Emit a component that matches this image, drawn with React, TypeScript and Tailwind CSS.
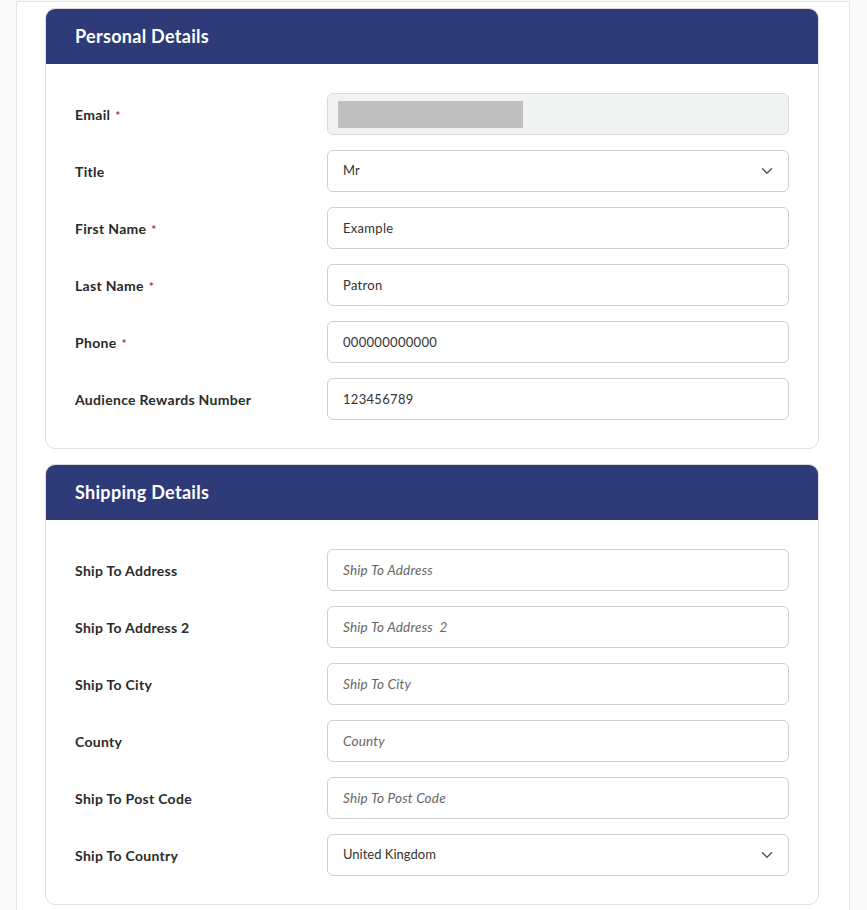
import React from 'react';

type Field = {
  label: string;
  required?: boolean;
  value?: string;
  placeholder?: string;
  kind?: 'text' | 'select' | 'redacted';
};

const personal: Field[] = [
  { label: 'Email', required: true, kind: 'redacted' },
  { label: 'Title', value: 'Mr', kind: 'select' },
  { label: 'First Name', required: true, value: 'Example' },
  { label: 'Last Name', required: true, value: 'Patron' },
  { label: 'Phone', required: true, value: '000000000000' },
  { label: 'Audience Rewards Number', value: '123456789' },
];

const shipping: Field[] = [
  { label: 'Ship To Address', placeholder: 'Ship To Address' },
  { label: 'Ship To Address 2', placeholder: 'Ship To Address  2' },
  { label: 'Ship To City', placeholder: 'Ship To City' },
  { label: 'County', placeholder: 'County' },
  { label: 'Ship To Post Code', placeholder: 'Ship To Post Code' },
  { label: 'Ship To Country', value: 'United Kingdom', kind: 'select' },
];

const Chevron = () => (
  <svg width="12" height="8" viewBox="0 0 12 8" fill="none" className="shrink-0">
    <path d="M1.5 1.8 6 6.2l4.5-4.4" stroke="#555" strokeWidth="1.4" strokeLinecap="round" strokeLinejoin="round" />
  </svg>
);

const Control = ({ field }: { field: Field }) => {
  if (field.kind === 'redacted') {
    return (
      <div className="h-[42px] rounded-[6px] border border-[#dadada] bg-[#f1f2f2] pl-[10px] flex items-center">
        <div className="h-[27px] w-[185px] bg-[#c0c0c0]" />
      </div>
    );
  }
  if (field.kind === 'select') {
    return (
      <div className="h-[42px] rounded-[6px] border border-[#cfcfcf] bg-white pl-[15px] pr-[15px] flex items-center justify-between text-[13px] text-[#333]">
        <span>{field.value}</span>
        <Chevron />
      </div>
    );
  }
  return (
    <input
      readOnly
      defaultValue={field.value}
      placeholder={field.placeholder}
      className="h-[42px] w-full rounded-[6px] border border-[#cfcfcf] bg-white px-[15px] text-[13px] tracking-[0.3px] text-[#333] outline-none placeholder:italic placeholder:text-[13.5px] placeholder:tracking-[0.2px] placeholder:text-[#666]"
    />
  );
};

const Card = ({ title, fields }: { title: string; fields: Field[] }) => (
  <div className="rounded-[10px] border border-[#dedede] bg-white overflow-hidden">
    <div className="h-[55px] bg-[#2e3b78] px-[29px] flex items-center">
      <h2 className="text-white font-bold text-[18px] tracking-[0.3px]">{title}</h2>
    </div>
    <div className="px-[29px] pt-[29px] pb-[28px] flex flex-col gap-[15px]">
      {fields.map(f => (
        <div key={f.label} className="grid grid-cols-[252px_1fr] items-center">
          <label className="font-bold text-[14px] tracking-[0.3px] text-[#2a2a2a]">
            {f.label}
            {f.required && <span className="text-[#b0324a] text-[12px] ml-[5px]">*</span>}
          </label>
          <Control field={f} />
        </div>
      ))}
    </div>
  </div>
);

export default function App() {
  return (
    <div className="min-h-screen bg-[#f9f9f9] pl-[16px] pt-px" style={{ fontFamily: 'Lato, "Noto Sans", sans-serif' }}>
      <div className="w-[834px] min-h-[909px] bg-white border-l border-r border-t border-[#e6e6e6] pl-[28px] pr-[30px] pt-[6px] pb-[4px] flex flex-col gap-[15px]">
        <Card title="Personal Details" fields={personal} />
        <Card title="Shipping Details" fields={shipping} />
      </div>
    </div>
  );
}
